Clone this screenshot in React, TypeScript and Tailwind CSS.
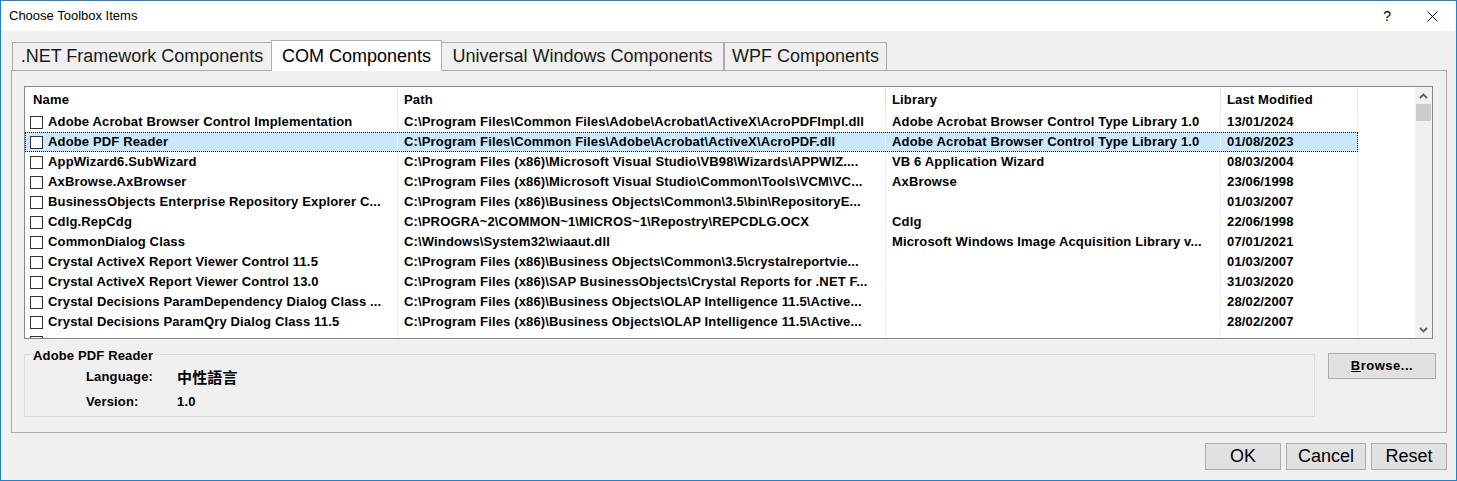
import React from "react";

type Row = { name: string; path: string; lib: string; date: string };

const rows: Row[] = [
  { name: "Adobe Acrobat Browser Control Implementation", path: "C:\\Program Files\\Common Files\\Adobe\\Acrobat\\ActiveX\\AcroPDFImpl.dll", lib: "Adobe Acrobat Browser Control Type Library 1.0", date: "13/01/2024" },
  { name: "Adobe PDF Reader", path: "C:\\Program Files\\Common Files\\Adobe\\Acrobat\\ActiveX\\AcroPDF.dll", lib: "Adobe Acrobat Browser Control Type Library 1.0", date: "01/08/2023" },
  { name: "AppWizard6.SubWizard", path: "C:\\Program Files (x86)\\Microsoft Visual Studio\\VB98\\Wizards\\APPWIZ....", lib: "VB 6 Application Wizard", date: "08/03/2004" },
  { name: "AxBrowse.AxBrowser", path: "C:\\Program Files (x86)\\Microsoft Visual Studio\\Common\\Tools\\VCM\\VC...", lib: "AxBrowse", date: "23/06/1998" },
  { name: "BusinessObjects Enterprise Repository Explorer C...", path: "C:\\Program Files (x86)\\Business Objects\\Common\\3.5\\bin\\RepositoryE...", lib: "", date: "01/03/2007" },
  { name: "Cdlg.RepCdg", path: "C:\\PROGRA~2\\COMMON~1\\MICROS~1\\Repostry\\REPCDLG.OCX", lib: "Cdlg", date: "22/06/1998" },
  { name: "CommonDialog Class", path: "C:\\Windows\\System32\\wiaaut.dll", lib: "Microsoft Windows Image Acquisition Library v...", date: "07/01/2021" },
  { name: "Crystal ActiveX Report Viewer Control 11.5", path: "C:\\Program Files (x86)\\Business Objects\\Common\\3.5\\crystalreportvie...", lib: "", date: "01/03/2007" },
  { name: "Crystal ActiveX Report Viewer Control 13.0", path: "C:\\Program Files (x86)\\SAP BusinessObjects\\Crystal Reports for .NET F...", lib: "", date: "31/03/2020" },
  { name: "Crystal Decisions ParamDependency Dialog Class ...", path: "C:\\Program Files (x86)\\Business Objects\\OLAP Intelligence 11.5\\Active...", lib: "", date: "28/02/2007" },
  { name: "Crystal Decisions ParamQry Dialog Class 11.5", path: "C:\\Program Files (x86)\\Business Objects\\OLAP Intelligence 11.5\\Active...", lib: "", date: "28/02/2007" },
  // partly scrolled out, only the checkbox top shows
  { name: "", path: "", lib: "", date: "" },
];

const listFont = "font-['Liberation_Sans',Arial,sans-serif] text-[13px] font-bold tracking-[0.15px] text-black";
const uiFont = "font-['Liberation_Sans',Arial,sans-serif]";

const Chevron = ({ down }: { down?: boolean }) => (
  <svg width="9" height="6" viewBox="0 0 9 6" className={down ? "rotate-180" : ""}>
    <path d="M1 5 L4.5 1.5 L8 5" fill="none" stroke="#606060" strokeWidth="1.8" />
  </svg>
);

const Tab = ({ label, w, active }: { label: string; w: string; active?: boolean }) =>
  active ? (
    <div className={`${w} h-[31px] -mb-px -mx-px z-10 bg-white border border-b-0 border-[#adadad] flex items-center justify-center text-[18px] text-black ${uiFont}`}>
      {label}
    </div>
  ) : (
    <div className={`${w} h-[28px] bg-[#f0f0f0] border border-[#adadad] border-b-0 flex items-center justify-center text-[18px] text-[#1a1a1a] ${uiFont}`}>
      {label}
    </div>
  );

const Button = ({ children, w, small }: { children: React.ReactNode; w: string; small?: boolean }) => (
  <div
    className={`${w} ${small ? "h-[26px] text-[13px] font-bold tracking-[0.5px]" : "h-[27px] text-[18px]"} bg-[#e1e1e1] border border-[#adadad] flex items-center justify-center text-black ${uiFont}`}
  >
    {children}
  </div>
);

export default function App() {
  return (
    <div className="w-[1457px] h-[481px] border border-[#1883d7] bg-[#f0f0f0] flex flex-col overflow-hidden">
      {/* title bar */}
      <div className="h-[30px] bg-white flex items-center shrink-0">
        <span className={`pl-[8px] text-[13px] text-black ${uiFont}`}>Choose Toolbox Items</span>
        <span className={`ml-auto mr-[36px] text-[14px] text-black ${uiFont}`}>?</span>
        <svg width="11" height="11" viewBox="0 0 11 11" className="mr-[18px]">
          <path d="M0.5 0.5 L10.5 10.5 M10.5 0.5 L0.5 10.5" stroke="#000" strokeWidth="1" />
        </svg>
      </div>

      {/* tabs */}
      <div className="flex items-end pl-[11px] pt-[9px] h-[39px] shrink-0">
        <Tab label=".NET Framework Components" w="w-[260px]" />
        <Tab label="COM Components" w="w-[171px]" active />
        <Tab label="Universal Windows Components" w="w-[283px]" />
        <Tab label="WPF Components" w="w-[163px]" />
      </div>

      {/* tab page */}
      <div className="ml-[10px] w-[1436px] h-[363px] border border-[#adadad] bg-[#f0f0f0] pl-[12px] pt-[15px] shrink-0">
        <div className="w-[1409px] h-[253px] border border-[#828790] bg-white flex">
          <div className="flex-1 overflow-hidden">
            {/* header */}
            <div className={`h-[25px] pt-px flex items-center ${listFont}`}>
              <div className="w-[373px] h-full pl-[8px] flex items-center border-r border-[#e5e5e5]">Name</div>
              <div className="w-[488px] h-full pl-[6px] flex items-center border-r border-[#e5e5e5]">Path</div>
              <div className="w-[335px] h-full pl-[6px] flex items-center border-r border-[#e5e5e5]">Library</div>
              <div className="w-[137px] h-full pl-[6px] flex items-center border-r border-[#e5e5e5]">Last Modified</div>
            </div>
            {/* rows */}
            {rows.map((r, i) => {
              const sel = i === 1;
              return (
                <div
                  key={i}
                  className={`h-[20px] w-[1333px] flex items-center ${listFont} ${
                    sel ? "bg-[#cce8ff] outline outline-1 outline-dotted outline-black -outline-offset-1" : ""
                  }`}
                >
                  <div className="w-[373px] h-full pl-[5px] flex items-center gap-[5px] overflow-hidden whitespace-nowrap border-r border-[#f0f0f0]">
                    <span className="w-[13px] h-[13px] border border-[#333] bg-white shrink-0" />
                    <span>{r.name}</span>
                  </div>
                  <div className="w-[488px] h-full pl-[6px] flex items-center overflow-hidden whitespace-nowrap border-r border-[#f0f0f0]">{r.path}</div>
                  <div className="w-[335px] h-full pl-[6px] flex items-center overflow-hidden whitespace-nowrap border-r border-[#f0f0f0]">{r.lib}</div>
                  <div className="w-[137px] h-full pl-[6px] flex items-center overflow-hidden whitespace-nowrap border-r border-[#f0f0f0]">{r.date}</div>
                </div>
              );
            })}
          </div>
          {/* scrollbar */}
          <div className="w-[17px] h-full bg-[#f0f0f0] flex flex-col shrink-0">
            <div className="h-[17px] flex items-center justify-center"><Chevron /></div>
            <div className="h-[17px] mx-[1px] bg-[#cdcdcd]" />
            <div className="flex-1" />
            <div className="h-[17px] flex items-center justify-center"><Chevron down /></div>
          </div>
        </div>

        {/* group box + browse */}
        <div className="flex items-start gap-[13px] mt-[15px]">
          <div className="relative w-[1291px] h-[63px] border border-[#dcdcdc]">
            <span className={`absolute -top-[9px] left-[6px] px-[2px] bg-[#f0f0f0] ${listFont}`}>Adobe PDF Reader</span>
            <div className={`grid grid-cols-[91px_1fr] pl-[61px] pt-[12px] gap-y-[6px] ${listFont}`}>
              <span className="h-[20px] flex items-center">Language:</span>
              <span className="h-[20px] flex items-center font-['Noto_Sans_CJK_TC',sans-serif] text-[15px]">中性語言</span>
              <span className="h-[18px] flex items-center">Version:</span>
              <span className="h-[18px] flex items-center">1.0</span>
            </div>
          </div>
          <div className="-mt-[1px]">
            <Button w="w-[108px]" small>
              <span><span className="underline">B</span>rowse...</span>
            </Button>
          </div>
        </div>
      </div>

      {/* dialog buttons */}
      <div className="flex justify-end gap-[5px] pr-[9px] mt-[10px]">
        <Button w="w-[76px]">OK</Button>
        <Button w="w-[80px]">Cancel</Button>
        <Button w="w-[76px]">Reset</Button>
      </div>
    </div>
  );
}
